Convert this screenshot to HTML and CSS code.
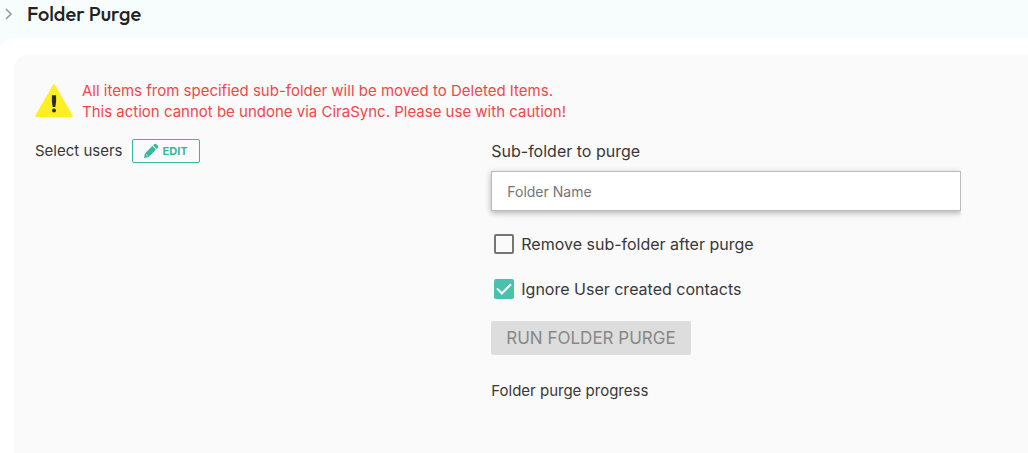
FILE: index.html
```
<!DOCTYPE html>
<html lang="en">
<head>
	<meta charset="UTF-8">
	<meta name="viewport" content="width=device-width, initial-scale=1">
	<title>Folder Purge</title>
	<link rel="stylesheet" href="styles.css">
</head>
<body>
	<header class="topbar">
		<svg class="chevron" width="8" height="12" viewBox="0 0 8 12" aria-hidden="true">
			<path d="M1 1l5 5-5 5" fill="none" stroke="#999" stroke-width="1.6"/>
		</svg>
		<h1>Folder Purge</h1>
	</header>
	<main class="page">
		<section class="panel">
			<div class="warning">
				<svg width="38" height="34" viewBox="0 0 38 34" aria-hidden="true">
					<path d="M19 1.2L36.8 32H1.2z" fill="#ffee22" stroke="#ffee22" stroke-width="2" stroke-linejoin="round"/>
					<path d="M16.9 11.2h4.2v6.6l-.8 5.2h-2.6l-.8-5.2z" fill="#2c2c22"/>
					<circle cx="19" cy="26.6" r="2" fill="#2c2c22"/>
				</svg>
				<p>All items from specified sub-folder will be moved to Deleted Items.<br>
				This action cannot be undone via CiraSync. Please use with caution!</p>
			</div>
			<div class="columns">
				<div class="users">
					<span>Select users</span>
					<button type="button" class="edit">
						<svg width="16" height="16" viewBox="0 0 16 16" aria-hidden="true">
							<path d="M1 15l.9-4.6 7.4-7.4 3.7 3.7-7.4 7.4zM10.1 2.2l1-1a1.5 1.5 0 0 1 2.1 0l1.6 1.6a1.5 1.5 0 0 1 0 2.1l-1 1z" fill="#34b89e"/>
							<path d="M2.7 11l2.3 2.3" stroke="#fafafa" stroke-width=".7"/>
						</svg>
						EDIT
					</button>
				</div>
				<form class="purge">
					<label class="title" for="folder">Sub-folder to purge</label>
					<input type="text" id="folder" placeholder="Folder Name">
					<label class="check">
						<input type="checkbox">
						Remove sub-folder after purge
					</label>
					<label class="check">
						<input type="checkbox" checked>
						Ignore User created contacts
					</label>
					<button type="button" class="run" disabled>RUN FOLDER PURGE</button>
					<p>Folder purge progress</p>
				</form>
			</div>
		</section>
	</main>
</body>
</html>
```
FILE: styles.css
```
* {
	box-sizing: border-box;
	margin: 0;
	padding: 0;
}

body {
	display: flex;
	flex-direction: column;
	min-height: 100vh;
	background: #f7fcfd;
	color: #383838;
	font: 400 15px/20px Inter, sans-serif;
}

.topbar {
	display: flex;
	align-items: center;
	gap: 14px;
	height: 38px;
	padding: 0 5px 10px;
}

.topbar h1 {
	color: #222;
	font: 500 20px/28px Outfit, Lato, sans-serif;
}

.page {
	display: flex;
	flex: 1;
	padding: 17px 0 0 14px;
	border-top-left-radius: 14px;
	background: #fff;
}

.panel {
	flex: 1;
	padding: 25px 67px 20px 21px;
	border-top-left-radius: 14px;
	background: #fafafa;
}

.warning {
	display: flex;
	align-items: center;
	gap: 9px;
	color: #f04848;
	line-height: 21px;
}

.columns {
	display: grid;
	grid-template-columns: 34fr 35fr;
	margin-top: 17px;
}

.users {
	display: flex;
	align-items: center;
	align-self: start;
	gap: 9px;
}

.edit {
	display: flex;
	align-items: center;
	gap: 4px;
	height: 24px;
	padding: 0 11px 0 10px;
	border: 1px solid #34b89e;
	border-radius: 2px;
	background: none;
	color: #34b89e;
	font: 700 11px/16px Inter, sans-serif;
}

.purge {
	display: flex;
	flex-direction: column;
	align-items: flex-start;
	padding-top: 2px;
}

.title,
.check {
	font-size: 16px;
}

.purge input[type="text"] {
	width: 100%;
	height: 40px;
	margin: 10px 0 23px;
	padding: 0 15px;
	border: 1px solid #bbb;
	background: #fff;
	box-shadow: 0 2px 6px rgba(0, 0, 0, .3);
	/* keep the shadow inside the column on the right */
	clip-path: inset(-10px 0 -10px -10px);
	color: #333;
	font: 400 14px/20px Inter, sans-serif;
}

.purge input::placeholder {
	color: #757575;
}

.check {
	display: flex;
	align-items: center;
	gap: 7px;
	margin: 0 0 25px 3px;
}

.check input {
	appearance: none;
	width: 20px;
	height: 20px;
	border: 2px solid #757575;
	border-radius: 2px;
}

.check input:checked {
	border-color: #48c2ae;
	background: #48c2ae;
}

/* tick */
.check input:checked::after {
	content: "";
	display: block;
	width: 12px;
	height: 6px;
	margin: 3px 1px;
	border: solid #fff;
	border-width: 0 0 2px 2px;
	transform: translateY(-1px) rotate(-45deg);
}

.run {
	height: 34px;
	margin: -3px 0 26px;
	padding: 0 15px;
	border: 0;
	border-radius: 2px;
	background: #ddd;
	color: #888;
	font: 400 17px/24px Inter, sans-serif;
}
```
